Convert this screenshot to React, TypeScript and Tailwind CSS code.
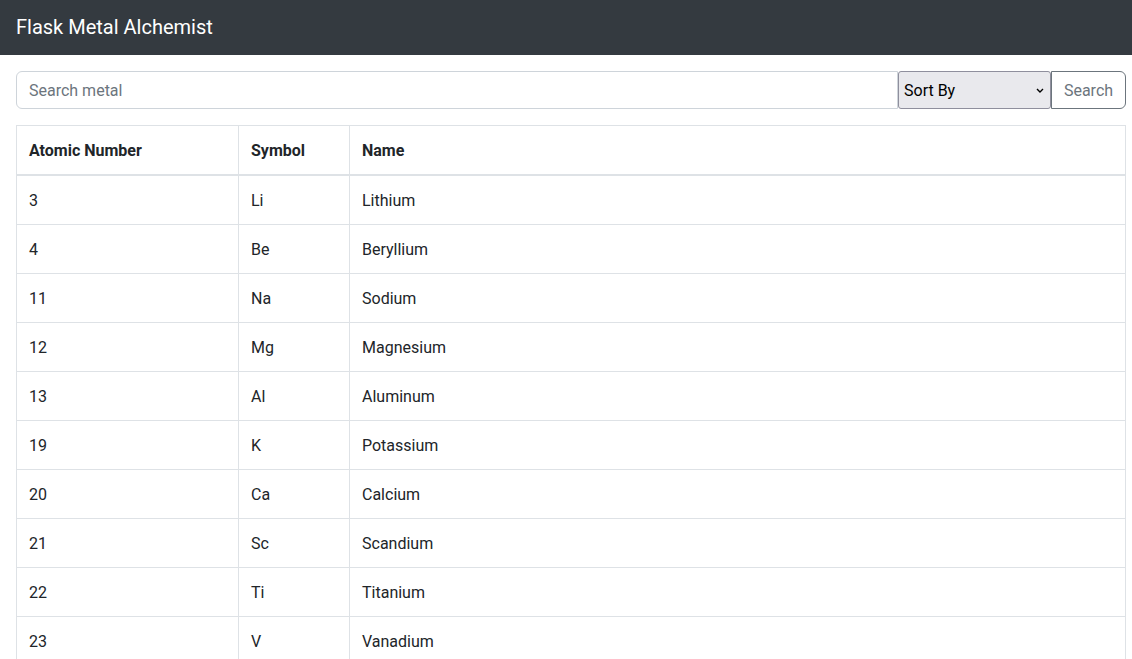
const metals = [
  { number: 3, symbol: "Li", name: "Lithium" },
  { number: 4, symbol: "Be", name: "Beryllium" },
  { number: 11, symbol: "Na", name: "Sodium" },
  { number: 12, symbol: "Mg", name: "Magnesium" },
  { number: 13, symbol: "Al", name: "Aluminum" },
  { number: 19, symbol: "K", name: "Potassium" },
  { number: 20, symbol: "Ca", name: "Calcium" },
  { number: 21, symbol: "Sc", name: "Scandium" },
  { number: 22, symbol: "Ti", name: "Titanium" },
  { number: 23, symbol: "V", name: "Vanadium" },
];

const cell = "border border-[#dee2e6] px-3 pt-[13px] pb-[11px]";

export default function App() {
  return (
    <div className="min-h-screen bg-white font-['Roboto',sans-serif] text-[#212529]">
      <nav className="flex h-[55px] items-center bg-[#343a40] px-4 pb-[1px]">
        <span className="text-[20px] text-white">Flask Metal Alchemist</span>
      </nav>

      <main className="pt-4 pl-4 pr-[6px]">
        <form className="flex h-[38px]" onSubmit={(e) => e.preventDefault()}>
          <input
            type="text"
            placeholder="Search metal"
            className="min-w-0 flex-1 rounded-l-md border border-[#ced4da] px-3 pt-[2px] text-base text-[#212529] outline-none placeholder:text-[#6c757d]"
          />
          <div className="relative w-[153px]">
            <select className="h-full w-full appearance-none rounded-[3px] border border-[#8f8f9d] bg-[#e9e9ed] pl-[5px] pt-[1px] text-base text-black outline-none">
              <option>Sort By</option>
              <option>Atomic Number</option>
              <option>Name</option>
            </select>
            <svg
              className="pointer-events-none absolute right-[7px] top-[17px]"
              width="8"
              height="5"
              viewBox="0 0 8 5"
              fill="none"
            >
              <path d="M1 1l3 3 3-3" stroke="#000" strokeWidth="1.4" />
            </svg>
          </div>
          <button
            type="submit"
            className="w-[75px] rounded-r-md border border-[#6c757d] bg-white pt-[2px] text-base text-[#6c757d]"
          >
            Search
          </button>
        </form>

        <table className="mt-4 w-full border-collapse border border-[#dee2e6] text-left text-base">
          <thead>
            <tr className="border-b-2 border-[#dee2e6]">
              <th className={`w-[222px] font-bold ${cell}`}>Atomic Number</th>
              <th className={`w-[111px] font-bold ${cell}`}>Symbol</th>
              <th className={`font-bold ${cell}`}>Name</th>
            </tr>
          </thead>
          <tbody>
            {metals.map((m) => (
              <tr key={m.number}>
                <td className={cell}>{m.number}</td>
                <td className={cell}>{m.symbol}</td>
                <td className={cell}>{m.name}</td>
              </tr>
            ))}
          </tbody>
        </table>
      </main>
    </div>
  );
}
